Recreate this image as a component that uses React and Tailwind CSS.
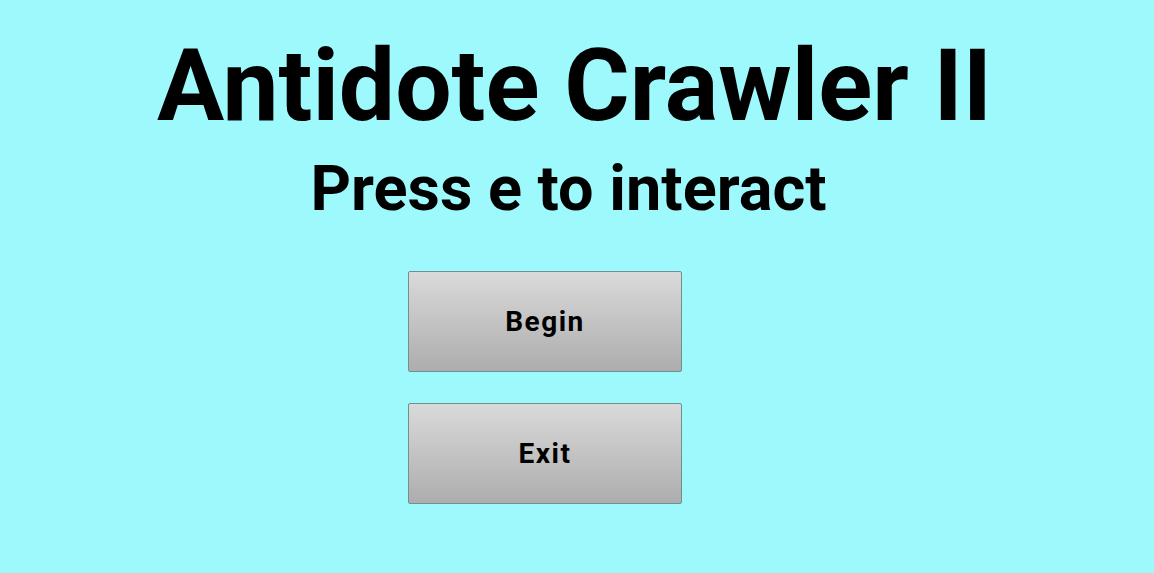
const MenuButton = ({ label }) => (
  <button className="w-[274px] h-[101px] rounded-[2px] border border-[#6f8f92] bg-gradient-to-b from-[#dadada] to-[#adadad] text-[28px] font-bold tracking-[1.5px] text-black">
    {label}
  </button>
);

export default function App() {
  return (
    <div className="w-[1154px] h-[573px] bg-[#9ef9fd] font-['Roboto',sans-serif] text-black flex flex-col items-center overflow-hidden">
      <h1 className="mt-[26px] ml-[-5px] text-[100px] font-bold leading-[120px]">Antidote Crawler II</h1>
      <h2 className="ml-[-17px] text-[63px] font-bold leading-[85px]">Press e to interact</h2>
      <div className="mt-[40px] ml-[-64px] flex flex-col gap-[31px]">
        <MenuButton label="Begin" />
        <MenuButton label="Exit" />
      </div>
    </div>
  );
}
